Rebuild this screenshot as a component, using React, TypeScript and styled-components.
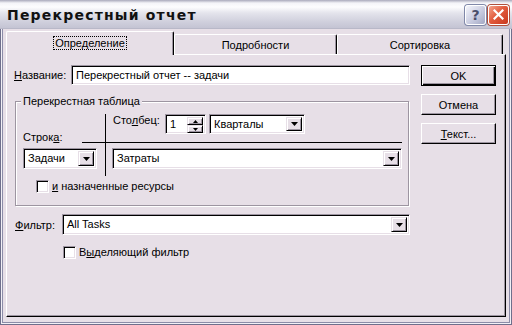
import React from "react";
import styled, { createGlobalStyle } from "styled-components";

const face = "#e7dfe7";
const shadow = "#9d95a1";

const GlobalStyle = createGlobalStyle`
  html, body {
    margin: 0;
    padding: 0;
    background: ${face};
  }
  body {
    font-family: "Liberation Sans", Arial, sans-serif;
    font-size: 11px;
    color: #000;
  }
`;

const Window = styled.div`
  width: 512px;
  height: 325px;
  box-sizing: border-box;
  display: flex;
  flex-direction: column;
  background: ${face};
  box-shadow: inset 0 0 0 1px #6f6f8c, inset 0 0 0 2px #f2f0f6,
    inset 0 0 0 3px #8c8ca8;
`;

const TitleBar = styled.div`
  height: 29px;
  flex: none;
  display: flex;
  align-items: center;
  padding: 0 3px 0 7px;
  box-sizing: border-box;
  background: linear-gradient(
    #a9a9bb 0,
    #f4f4f8 3px,
    #fdfdfe 7px,
    #e4e4ec 13px,
    #cfcfdc 22px,
    #c2c2d2 29px
  );
  border-bottom: 1px solid #b8b8c8;
`;

const Caption = styled.div`
  flex: 1;
  font-family: "DejaVu Sans", Verdana, sans-serif;
  font-weight: bold;
  font-size: 14px;
  letter-spacing: 1.2px;
  color: #111;
  padding-top: 1px;
`;

const CaptionButton = styled.div<{ $close?: boolean }>`
  width: 21px;
  height: 20px;
  margin-left: 2px;
  box-sizing: border-box;
  border-radius: 3px;
  display: flex;
  align-items: center;
  justify-content: center;
  border: 1px solid #fff;
  box-shadow: 0 0 0 1px ${(p) => (p.$close ? "#b0503c" : "#8088a8")};
  background: ${(p) =>
    p.$close
      ? "linear-gradient(135deg, #f4a48c 0%, #e25c3e 45%, #c8381f 100%)"
      : "linear-gradient(135deg, #f4f5fb 0%, #c9cce0 55%, #a3a8c4 100%)"};
  color: #4a4e6a;
  font-family: "DejaVu Sans", sans-serif;
  font-weight: bold;
  font-size: 14px;
  line-height: 1;
  margin-top: 1px;
`;

const Body = styled.div`
  flex: 1;
  display: flex;
  flex-direction: column;
  padding: 2px 6px 8px 6px;
  min-height: 0;
`;

const TabStrip = styled.div`
  display: flex;
  align-items: flex-end;
  height: 23px;
  flex: none;
  position: relative;
  z-index: 1;
`;

const Tab = styled.div<{ $active?: boolean; $w: number }>`
  width: ${(p) => p.$w}px;
  height: ${(p) => (p.$active ? 24 : 20)}px;
  margin-bottom: ${(p) => (p.$active ? -1 : 0)}px;
  box-sizing: border-box;
  display: flex;
  align-items: center;
  justify-content: center;
  padding-bottom: ${(p) => (p.$active ? 2 : 0)}px;
  background: ${face};
  border-top: 1px solid #fff;
  border-left: 1px solid #fff;
  border-right: 1px solid #000;
  border-radius: 2px 2px 0 0;
  box-shadow: inset -1px 0 0 ${shadow};
`;

const TabText = styled.span<{ $focus?: boolean }>`
  padding: 0 1px;
  line-height: 12px;
  outline: ${(p) => (p.$focus ? "1px dotted #000" : "none")};
  outline-offset: 0;
`;

const Panel = styled.div`
  flex: 1;
  display: flex;
  align-items: flex-start;
  padding: 10px 0 0 7px;
  background: ${face};
  border-top: 1px solid #fff;
  border-left: 1px solid #fff;
  border-right: 1px solid #000;
  border-bottom: 1px solid #000;
  box-shadow: inset -1px -1px 0 ${shadow};
`;

const MainColumn = styled.div`
  width: 396px;
  display: flex;
  flex-direction: column;
`;

const ButtonColumn = styled.div`
  width: 75px;
  margin-left: 11px;
  display: flex;
  flex-direction: column;
  gap: 8px;
`;

const PushButton = styled.div<{ $default?: boolean }>`
  height: 21px;
  box-sizing: border-box;
  display: flex;
  align-items: center;
  justify-content: center;
  background: ${face};
  border: 1px solid;
  border-color: ${(p) => (p.$default ? "#000" : "#fff #000 #000 #fff")};
  box-shadow: ${(p) =>
    p.$default
      ? `inset 1px 1px 0 #fff, inset -1px -1px 0 #000, inset -2px -2px 0 ${shadow}`
      : `inset -1px -1px 0 ${shadow}`};
`;

const Key = styled.span`
  text-decoration: underline;
  text-underline-offset: 1px;
`;

const FieldRow = styled.div<{ $mt?: number }>`
  display: flex;
  align-items: center;
  margin-top: ${(p) => p.$mt ?? 0}px;
`;

const Label = styled.div<{ $w: number; $pl?: number }>`
  width: ${(p) => p.$w}px;
  flex: none;
  padding-left: ${(p) => p.$pl ?? 0}px;
  box-sizing: border-box;
  white-space: nowrap;
`;

const Sunken = styled.div<{ $h: number; $w?: number }>`
  height: ${(p) => p.$h}px;
  ${(p) => (p.$w ? `width: ${p.$w}px; flex: none;` : "flex: 1;")}
  box-sizing: border-box;
  display: flex;
  align-items: center;
  background: #fff;
  border: 1px solid;
  border-color: ${shadow} #fff #fff ${shadow};
  box-shadow: inset 1px 1px 0 #000, inset -1px -1px 0 ${face};
  padding: 2px;
`;

const FieldText = styled.div`
  flex: 1;
  padding-left: 2px;
  white-space: nowrap;
  overflow: hidden;
  line-height: 13px;
`;

const SmallButton = styled.div<{ $w: number; $h?: number }>`
  width: ${(p) => p.$w}px;
  height: ${(p) => (p.$h ? `${p.$h}px` : "100%")};
  flex: none;
  box-sizing: border-box;
  display: flex;
  align-items: center;
  justify-content: center;
  background: ${face};
  border: 1px solid;
  border-color: ${face} #000 #000 ${face};
  box-shadow: inset 1px 1px 0 #fff, inset -1px -1px 0 ${shadow};
`;

const SpinStack = styled.div`
  display: flex;
  flex-direction: column;
  height: 100%;
`;

const DownArrow = () => (
  <svg width="7" height="4" viewBox="0 0 7 4">
    <path d="M0 0h7L3.5 4z" fill="#000" />
  </svg>
);

const SpinArrow = ({ up }: { up?: boolean }) => (
  <svg width="5" height="3" viewBox="0 0 5 3">
    <path d={up ? "M0 3h5L2.5 0z" : "M0 0h5L2.5 3z"} fill="#000" />
  </svg>
);

const Combo = ({ value, h = 21, w }: { value: string; h?: number; w?: number }) => (
  <Sunken $h={h} $w={w}>
    <FieldText>{value}</FieldText>
    <SmallButton $w={16}>
      <DownArrow />
    </SmallButton>
  </Sunken>
);

const GroupBox = styled.div`
  margin: 16px 0 0 1px;
  width: 394px;
  box-sizing: border-box;
  border: 1px solid ${shadow};
  box-shadow: inset 1px 1px 0 #fff, 1px 1px 0 #fff;
  padding: 0 6px 12px 7px;
`;

const Legend = styled.div`
  display: block;
  width: max-content;
  margin: -7px 0 0 -2px;
  padding: 0 2px;
  line-height: 13px;
  background: ${face};
`;

const CrossGrid = styled.div`
  display: grid;
  grid-template-columns: 82px 1px 1fr;
  grid-template-rows: 28px 1px 33px;
  margin-top: 6px;
`;

const Divider = styled.div<{ $row?: boolean; $indent?: number; $col?: number }>`
  background: #000;
  ${(p) =>
    p.$row
      ? `height: 1px; grid-row: 2; grid-column: ${p.$col ?? 1}; margin-left: ${p.$indent ?? 0}px;`
      : "grid-row: 1 / 4; grid-column: 2;"}
`;

const RowCaption = styled.div`
  grid-column: 1;
  grid-row: 1;
  align-self: end;
  line-height: 13px;
  margin-bottom: -2px;
`;

const ColumnCell = styled.div`
  grid-column: 3;
  grid-row: 1;
  display: flex;
  align-items: flex-start;
  padding-left: 7px;
`;

const ComboCell = styled.div<{ $col: number; $pl?: number }>`
  grid-column: ${(p) => p.$col};
  grid-row: 3;
  padding-top: 5px;
  padding-left: ${(p) => p.$pl ?? 0}px;
  display: flex;
`;

const Gap = styled.div<{ $w: number }>`
  width: ${(p) => p.$w}px;
  flex: none;
`;

const CheckRow = styled.div<{ $mt: number; $pl: number }>`
  display: flex;
  align-items: center;
  margin-top: ${(p) => p.$mt}px;
  padding-left: ${(p) => p.$pl}px;
  line-height: 13px;
`;

const CheckBox = styled.div`
  width: 13px;
  height: 13px;
  box-sizing: border-box;
  background: #fff;
  border: 1px solid;
  border-color: ${shadow} #fff #fff ${shadow};
  box-shadow: inset 1px 1px 0 #000, inset -1px -1px 0 ${face};
  margin-right: 3px;
`;

const CloseIcon = () => (
  <svg width="11" height="11" viewBox="0 0 11 11">
    <path d="M1.5 1.5l8 8M9.5 1.5l-8 8" stroke="#fff" strokeWidth="2.2" strokeLinecap="square" />
  </svg>
);

export default function App() {
  return (
    <>
      <GlobalStyle />
      <Window>
        <TitleBar>
          <Caption>Перекрестный отчет</Caption>
          <CaptionButton>?</CaptionButton>
          <CaptionButton $close>
            <CloseIcon />
          </CaptionButton>
        </TitleBar>
        <Body>
          <TabStrip>
            <Tab $active $w={168}>
              <TabText $focus>Определение</TabText>
            </Tab>
            <Tab $w={163}>
              <TabText>Подробности</TabText>
            </Tab>
            <Tab $w={166}>
              <TabText>Сортировка</TabText>
            </Tab>
          </TabStrip>
          <Panel>
            <MainColumn>
              <FieldRow>
                <Label $w={57}>
                  <Key>Н</Key>азвание:
                </Label>
                <Sunken $h={20}>
                  <FieldText>Перекрестный отчет -- задачи</FieldText>
                </Sunken>
              </FieldRow>

              <GroupBox>
                <Legend>Перекрестная таблица</Legend>
                <CrossGrid>
                  <RowCaption>
                    Строк<Key>а</Key>:
                  </RowCaption>
                  <Divider />
                  <ColumnCell>
                    <Label $w={52}>
                      Сто<Key>л</Key>бец:
                    </Label>
                    <Sunken $h={20} $w={41}>
                      <FieldText>1</FieldText>
                      <SpinStack>
                        <SmallButton $w={16} $h={8}>
                          <SpinArrow up />
                        </SmallButton>
                        <SmallButton $w={16} $h={8}>
                          <SpinArrow />
                        </SmallButton>
                      </SpinStack>
                    </Sunken>
                    <Gap $w={3} />
                    <Combo value="Кварталы" h={20} w={96} />
                  </ColumnCell>
                  <Divider $row $col={1} $indent={59} />
                  <Divider $row $col={3} />
                  <ComboCell $col={1}>
                    <Combo value="Задачи" w={74} />
                  </ComboCell>
                  <ComboCell $col={3} $pl={6}>
                    <Combo value="Затраты" />
                  </ComboCell>
                </CrossGrid>
                <CheckRow $mt={4} $pl={13}>
                  <CheckBox />
                  <span>
                    <Key>и</Key> назначенные ресурсы
                  </span>
                </CheckRow>
              </GroupBox>

              <FieldRow $mt={8}>
                <Label $w={48} $pl={1}>
                  <Key>Ф</Key>ильтр:
                </Label>
                <Combo value="All Tasks" />
              </FieldRow>
              <CheckRow $mt={11} $pl={49}>
                <CheckBox />
                <span>
                  В<Key>ы</Key>деляющий фильтр
                </span>
              </CheckRow>
            </MainColumn>
            <ButtonColumn>
              <PushButton $default>OK</PushButton>
              <PushButton>Отмена</PushButton>
              <PushButton>
                <span>
                  <Key>Т</Key>екст...
                </span>
              </PushButton>
            </ButtonColumn>
          </Panel>
        </Body>
      </Window>
    </>
  );
}
